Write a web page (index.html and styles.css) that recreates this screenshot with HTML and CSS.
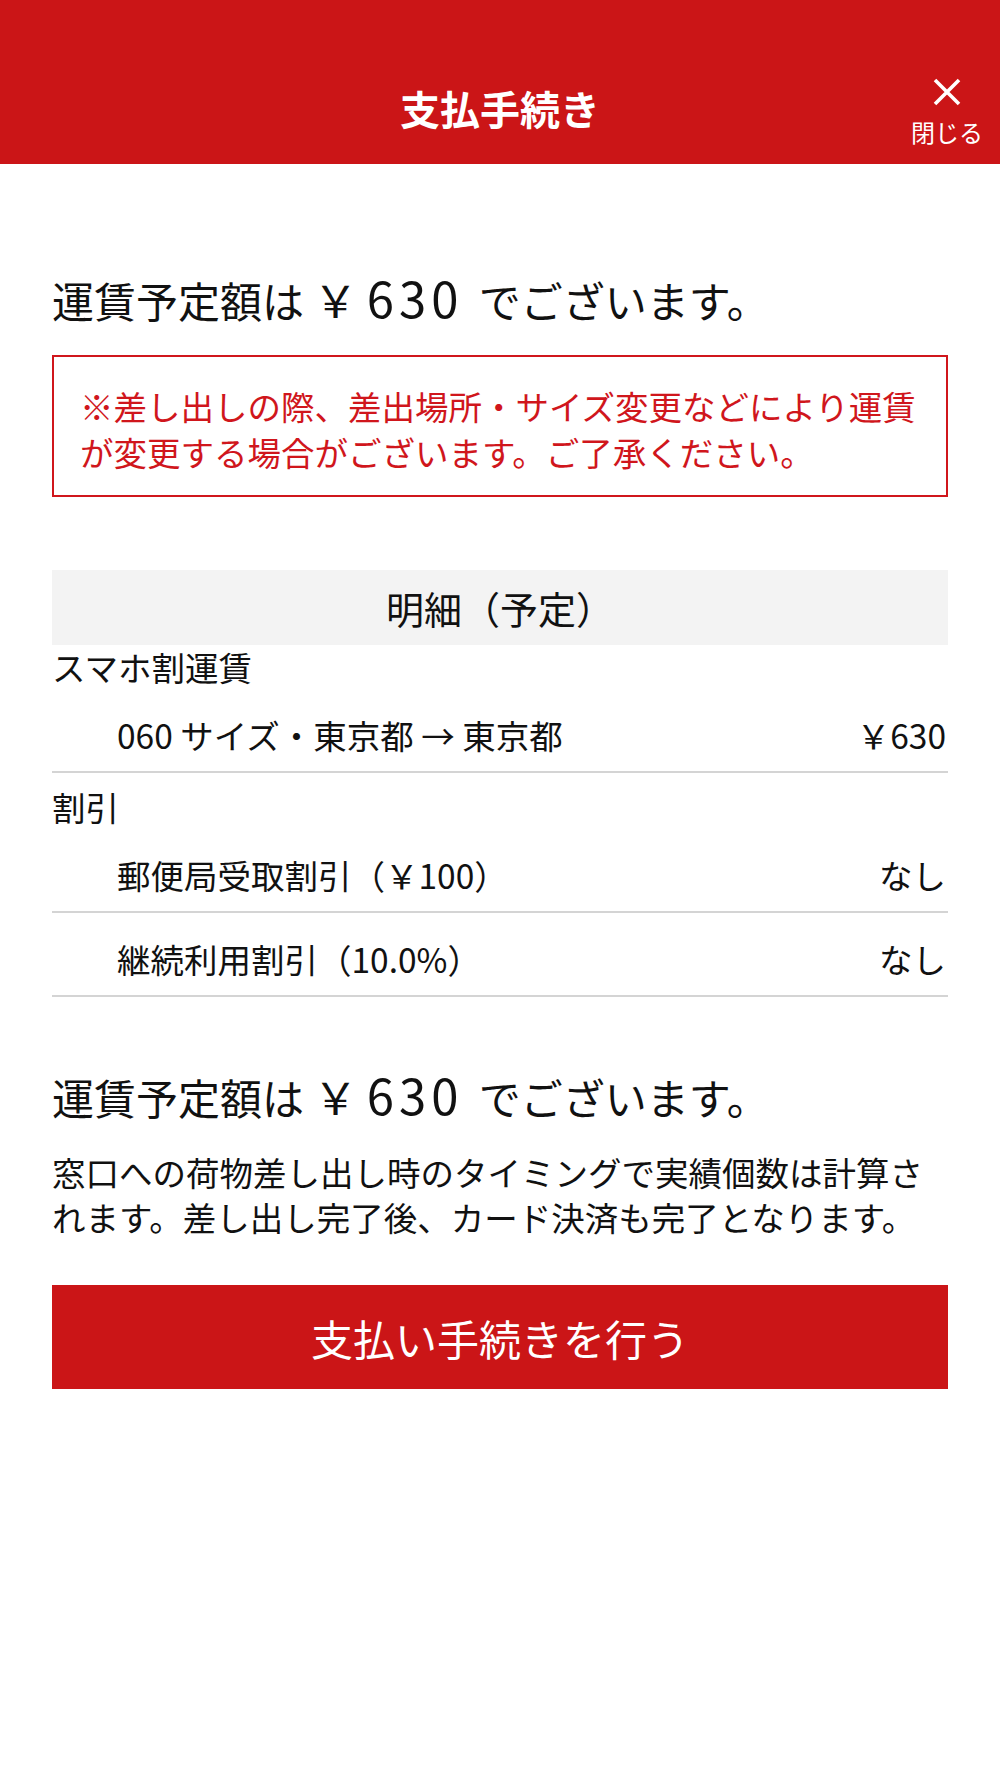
FILE: index.html
```html
<!DOCTYPE html>
<html lang="ja">

<head>
  <meta charset="UTF-8">
  <meta name="viewport" content="width=device-width, initial-scale=1.0">
  <title>支払手続き</title>

  <link rel="stylesheet" href="styles.css">
</head>

<body>
  <header class="top-bar">
    <h1 class="top-bar-title">支払手続き</h1>
    <button class="close-button" type="button">
      <svg class="close-icon" width="30" height="28" viewBox="0 0 30 28" aria-hidden="true">
        <path d="M3 2 L27 26 M27 2 L3 26" stroke="#fff" stroke-width="3.6" fill="none" />
      </svg>
      <span>閉じる</span>
    </button>
  </header>

  <main class="content">
    <p class="fare-total">運賃予定額は <span class="yen">￥</span> <span class="amount">630</span> でございます。</p>

    <div class="notice">
      <p>※差し出しの際、差出場所・サイズ変更などにより運賃が変更する場合がございます。ご了承ください。</p>
    </div>

    <section class="details">
      <h2 class="details-title">明細（予定）</h2>

      <div class="details-group">
        <p class="group-label">スマホ割運賃</p>
        <div class="details-row">
          <span>060 サイズ・東京都 → 東京都</span>
          <span>￥630</span>
        </div>
      </div>

      <div class="details-group">
        <p class="group-label">割引</p>
        <div class="details-row">
          <span>郵便局受取割引（￥100）</span>
          <span>なし</span>
        </div>
        <div class="details-row">
          <span>継続利用割引（10.0%）</span>
          <span>なし</span>
        </div>
      </div>
    </section>

    <p class="fare-total fare-total-bottom">運賃予定額は <span class="yen">￥</span> <span class="amount">630</span> でございます。</p>

    <p class="fare-note">窓口への荷物差し出し時のタイミングで実績個数は計算されます。差し出し完了後、カード決済も完了となります。</p>

    <button class="pay-button" type="button">支払い手続きを行う</button>
  </main>
</body>

</html>
```

FILE: styles.css
```css
body {
  background: #fff;
  color: #111;
  font-family: "Noto Sans CJK JP", sans-serif;
  margin: 0;
  width: 100vw;
}

p,
h1,
h2 {
  margin: 0;
}

.top-bar {
  align-items: center;
  background-color: #cb1517;
  box-sizing: border-box;
  display: grid;
  grid-template-columns: 1fr auto 1fr;
  height: 164px;
  padding-top: 52px;
}

.top-bar-title {
  color: #fff;
  font-size: 40px;
  font-weight: 700;
  grid-column: 2;
  line-height: 56px;
}

.close-button {
  align-items: center;
  background: none;
  border: 0;
  color: #fff;
  display: flex;
  flex-direction: column;
  font-family: inherit;
  font-size: 24px;
  gap: 12px;
  grid-column: 3;
  justify-self: end;
  line-height: 28px;
  margin-top: 8px;
  padding: 0 17px 0 0;
}

.close-icon {
  display: block;
}

.content {
  padding: 0 52px;
}

.fare-total {
  font-size: 42px;
  line-height: 60px;
  margin-top: 103px;
}

.fare-total .yen {
  font-size: 44px;
}

.fare-total .amount {
  font-size: 49px;
  letter-spacing: 5px;
  margin-right: 6px;
}

.fare-total-bottom {
  margin-top: 67px;
}

.notice {
  border: 2px solid #d0161c;
  color: #d0161c;
  font-size: 33.5px;
  line-height: 46px;
  margin-top: 25px;
  padding: 26px 26px 20px;
}

.details {
  margin-top: 73px;
}

.details-title {
  background-color: #f3f3f3;
  font-size: 38px;
  font-weight: 400;
  line-height: 75px;
  text-align: center;
}

.details-group+.details-group {
  margin-top: 12px;
}

.group-label {
  font-size: 33.5px;
  line-height: 44px;
}

.details-row {
  border-bottom: 2px solid #d4d4d4;
  display: flex;
  font-size: 33.5px;
  justify-content: space-between;
  line-height: 44px;
  padding: 24px 2px 14px 65px;
}

.fare-note {
  font-size: 33.5px;
  line-height: 45px;
  margin-top: 22px;
}

.pay-button {
  background-color: #cb1517;
  border: 0;
  color: #fff;
  display: block;
  font-family: inherit;
  font-size: 42px;
  height: 104px;
  margin-top: 46px;
  width: 100%;
}
```
